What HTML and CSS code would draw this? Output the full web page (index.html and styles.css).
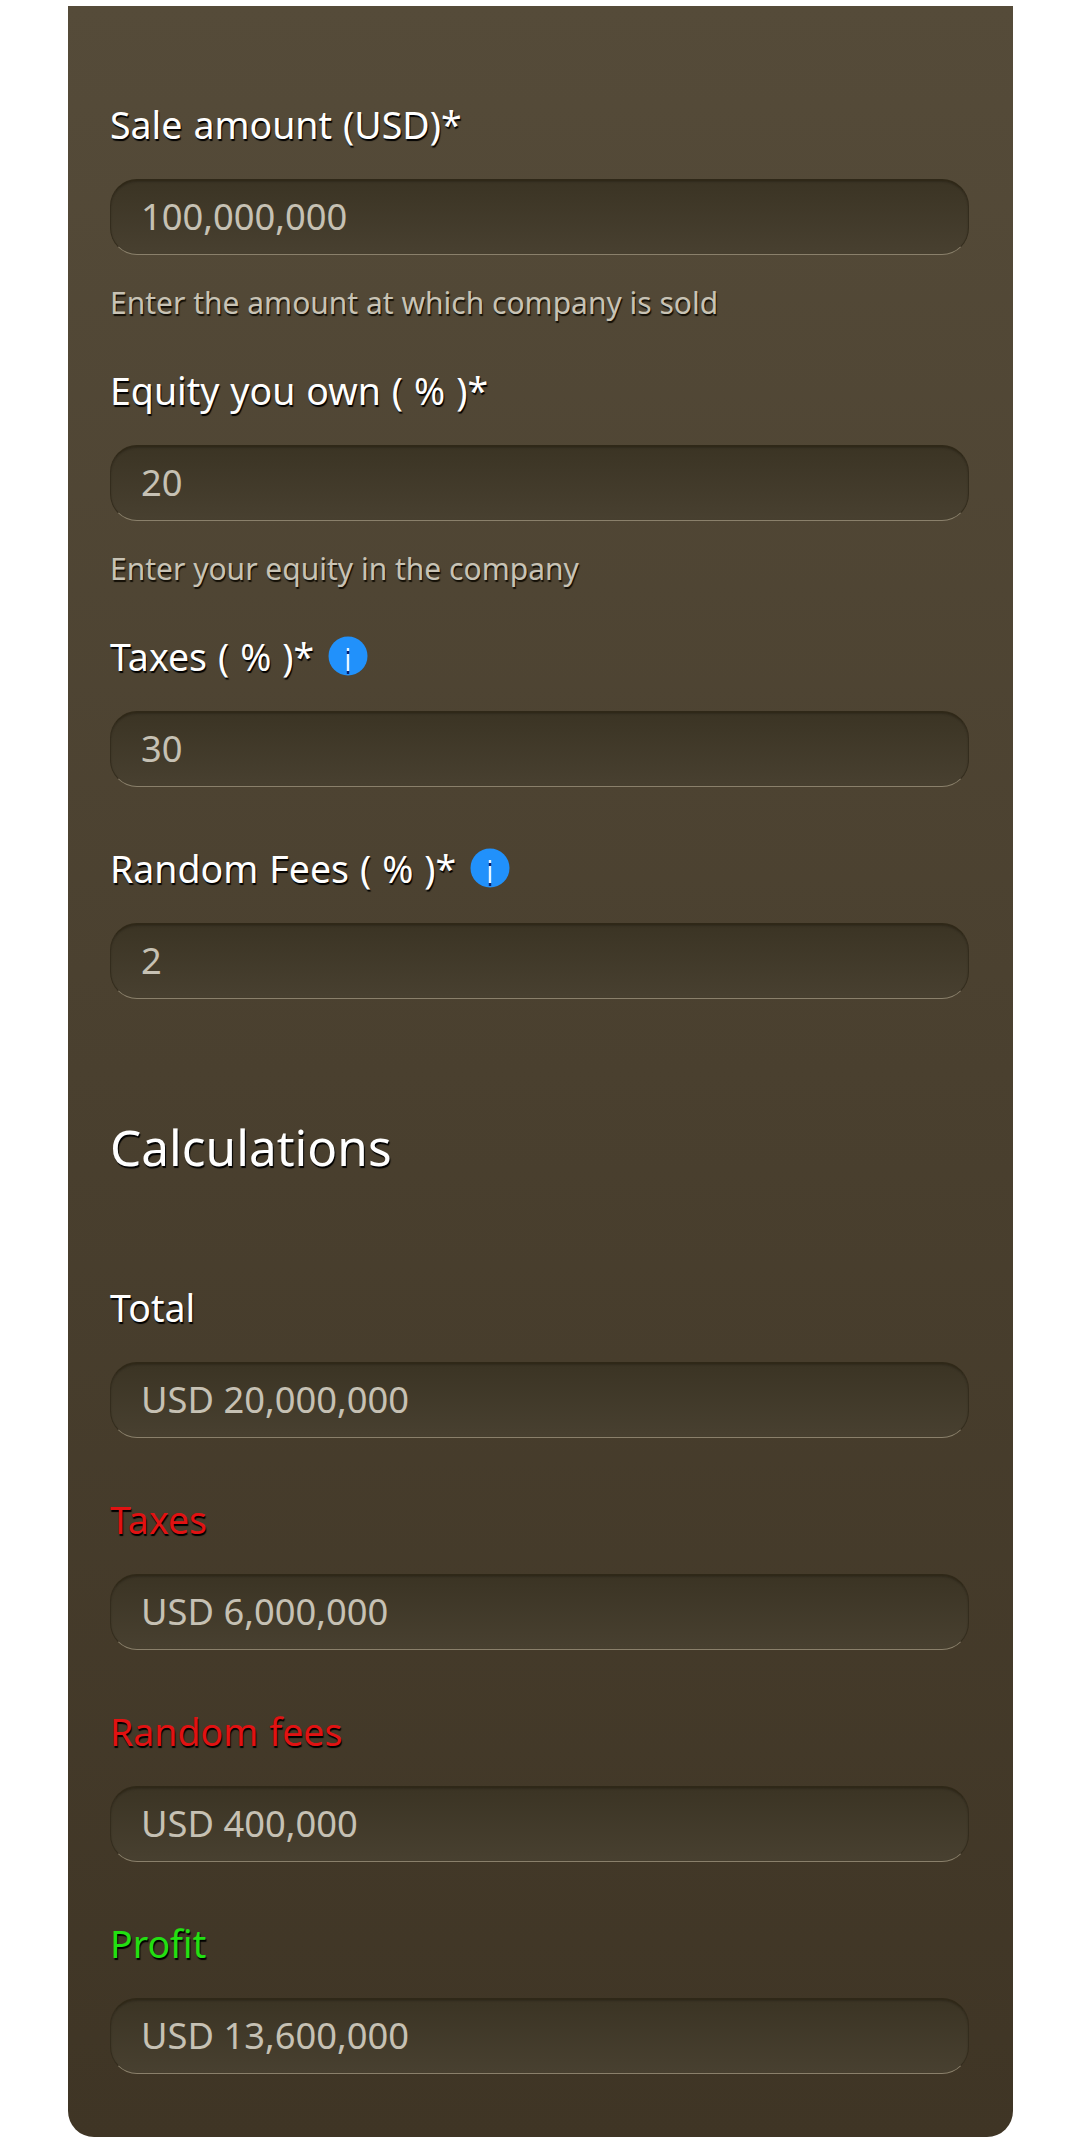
FILE: index.html
```html
<!DOCTYPE html>
<html>
<head>
    <title>Sale calculator</title>
    <link rel="stylesheet" href="styles.css">
</head>
<body>
    <div class="panel">
        <div class="field">
            <label class="field-label">Sale amount (USD)*</label>
            <input class="field-input" type="text" value="100,000,000">
            <div class="hint">Enter the amount at which company is sold</div>
        </div>

        <div class="field">
            <label class="field-label">Equity you own ( % )*</label>
            <input class="field-input" type="text" value="20">
            <div class="hint">Enter your equity in the company</div>
        </div>

        <div class="field">
            <label class="field-label">Taxes ( % )*
                <svg class="info" viewBox="0 0 40 40"><circle cx="20" cy="20" r="19.5" fill="#2191fb"/><path d="M20 12v3" stroke="#e6f5ff" stroke-width="2.4"/><path d="M20 15v3M20 35v3" stroke="#0a1f6e" stroke-width="2.4"/><path d="M20 18v17" stroke="#e6f5ff" stroke-width="2.4"/></svg>
            </label>
            <input class="field-input" type="text" value="30">
        </div>

        <div class="field">
            <label class="field-label">Random Fees ( % )*
                <svg class="info" viewBox="0 0 40 40"><circle cx="20" cy="20" r="19.5" fill="#2191fb"/><path d="M20 12v3" stroke="#e6f5ff" stroke-width="2.4"/><path d="M20 15v3M20 35v3" stroke="#0a1f6e" stroke-width="2.4"/><path d="M20 18v17" stroke="#e6f5ff" stroke-width="2.4"/></svg>
            </label>
            <input class="field-input" type="text" value="2">
        </div>

        <h2 class="section-title">Calculations</h2>

        <div class="field">
            <label class="field-label">Total</label>
            <input class="field-input" type="text" value="USD 20,000,000">
        </div>

        <div class="field">
            <label class="field-label red">Taxes</label>
            <input class="field-input" type="text" value="USD 6,000,000">
        </div>

        <div class="field">
            <label class="field-label red">Random fees</label>
            <input class="field-input" type="text" value="USD 400,000">
        </div>

        <div class="field">
            <label class="field-label green">Profit</label>
            <input class="field-input" type="text" value="USD 13,600,000">
        </div>
    </div>
</body>
</html>
```

FILE: styles.css
```css
body {
    margin: 0;
    background: #fff;
    font-family: "Noto Sans", sans-serif;
}

.panel {
    display: flex;
    flex-direction: column;
    width: 945px;
    box-sizing: border-box;
    margin: 6px 0 4px 68px;
    padding: 96px 44px 4px 42px;
    border-radius: 0 0 26px 26px;
    background: linear-gradient(#554b39, #3f3525);
}

.field {
    display: flex;
    flex-direction: column;
    margin-bottom: 45px;
}

.field-label {
    display: flex;
    align-items: center;
    gap: 14px;
    height: 46px;
    margin-bottom: 31px;
    font-size: 37.5px;
    line-height: 46px;
    word-spacing: 1.2px;
    color: #fff;
    text-shadow: 1px 2px 1px #000;
}

.field-label.red {
    color: #e11212;
}

.field-label.green {
    color: #22e012;
}

.info {
    width: 40px;
    height: 40px;
    margin-top: -2px;
}

.field-input {
    display: block;
    width: 100%;
    height: 76px;
    box-sizing: border-box;
    margin-bottom: 14px;
    padding: 0 30px 4px;
    border: 1px solid #332c1d;
    border-top: 2px solid #2f2818;
    border-bottom-color: #8a806b;
    border-radius: 27px;
    outline: none;
    background: linear-gradient(#3b3424, #484030);
    box-shadow: inset 0 1px 2px rgba(0, 0, 0, 0.2);
    font-family: "Noto Sans", sans-serif;
    font-size: 36.3px;
    color: #c6c1b4;
}

.hint {
    margin-top: 14px;
    font-size: 30px;
    line-height: 40px;
    color: #c8c3b5;
    text-shadow: 1px 2px 1px #120e06;
}

.section-title {
    margin: 59px 0 108px;
    font-size: 49.5px;
    font-weight: 400;
    line-height: 60px;
    color: #fff;
    text-shadow: 1px 2px 1px #000;
}
```
